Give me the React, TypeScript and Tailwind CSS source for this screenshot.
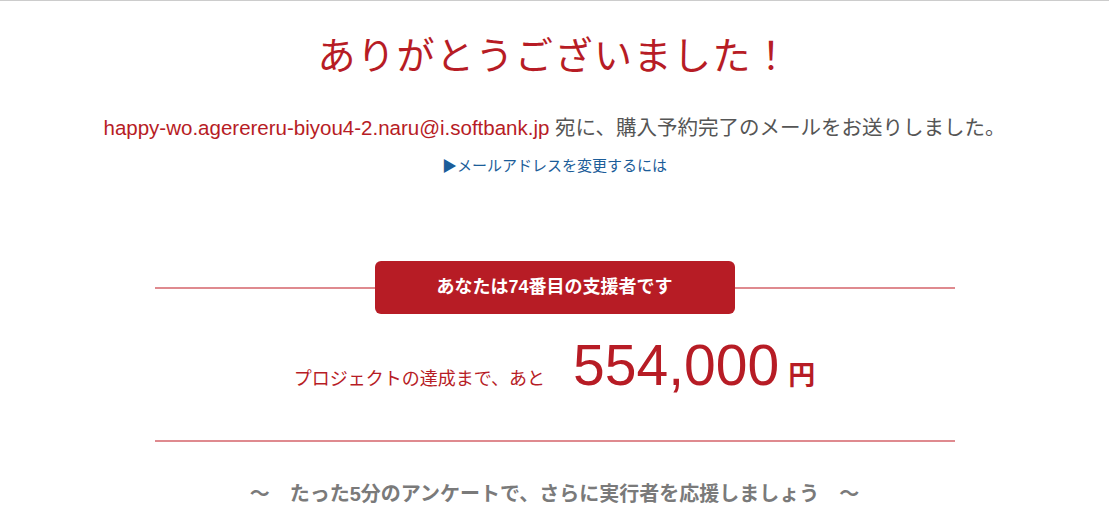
export default function App() {
  return (
    <div
      className="min-h-screen bg-white border-t border-[#cccccc] text-[#555555]"
      style={{ fontFamily: '"Liberation Sans", "Noto Sans CJK JP", sans-serif' }}
    >
      {/* 見出し */}
      <h1 className="pt-[33px] text-center text-[38px] leading-[44px] tracking-[1.5px] text-[#b71c25] font-normal">
        ありがとうございました！
      </h1>

      <p className="mt-[35px] text-center text-[20.5px] leading-[30px]">
        <span className="text-[#b71c25]">happy-wo.agerereru-biyou4-2.naru@i.softbank.jp</span>{" "}
        宛に、購入予約完了のメールをお送りしました。
      </p>

      <p className="mt-[13px] text-center text-[15px] leading-[20px]">
        <a href="#" className="text-[#1c5d99]">
          ▶メールアドレスを変更するには
        </a>
      </p>

      {/* 支援者バッジ */}
      <div className="mx-auto mt-[85px] flex w-[800px] items-center">
        <div className="h-[2px] flex-1 bg-[#df8a8f]" />
        <div className="flex h-[53px] w-[360px] items-center justify-center rounded-[6px] bg-[#b71c25] text-[18px] font-bold text-white">
          あなたは74番目の支援者です
        </div>
        <div className="h-[2px] flex-1 bg-[#df8a8f]" />
      </div>

      {/* 残り金額 */}
      <div className="mt-[21px] flex items-baseline justify-center text-[#b71c25]">
        <span className="text-[18px]">プロジェクトの達成まで、あと</span>
        <span className="ml-[28px] text-[57px] leading-[60px]">554,000</span>
        <span className="ml-[9px] text-[27px] font-bold">円</span>
      </div>

      <div className="mx-auto mt-[43px] h-[2px] w-[800px] bg-[#df8a8f]" />

      <p className="mt-[39px] text-center text-[20px] leading-[26px] font-bold text-[#7a7a7a]">
        ～　たった5分のアンケートで、さらに実行者を応援しましょう　～
      </p>

      <div className="mt-[9px] border-t border-[#777777]" />
    </div>
  );
}
